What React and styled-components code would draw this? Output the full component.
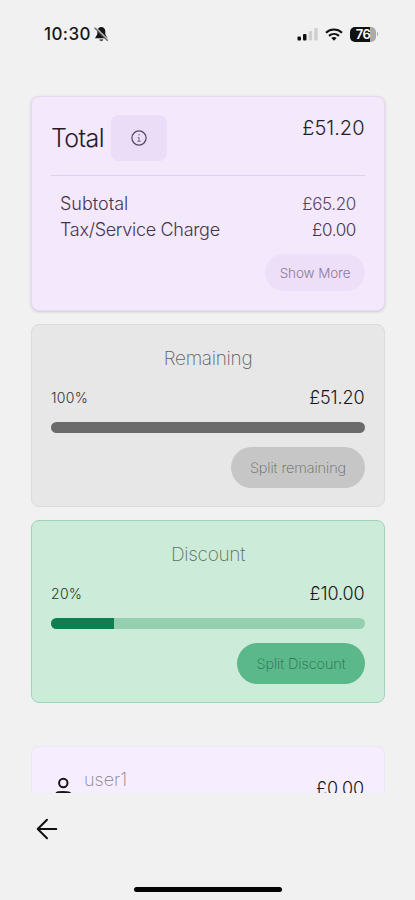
import React from 'react';
import styled, { createGlobalStyle } from 'styled-components';

const GlobalStyle = createGlobalStyle`
  * { box-sizing: border-box; }
  body { margin: 0; background: #f1f1f1; }
`;

const Screen = styled.div`
  width: 415px;
  height: 900px;
  display: flex;
  flex-direction: column;
  overflow: hidden;
  background: #f1f1f1;
  color: #171717;
  font-family: Inter, 'Liberation Sans', sans-serif;
`;

const StatusBar = styled.header`
  height: 68px;
  flex: none;
  display: flex;
  align-items: center;
  justify-content: space-between;
  padding: 0 37px 0 44px;
`;

const StatusGroup = styled.div`
  display: flex;
  align-items: center;
  gap: ${(p) => p.$gap}px;
`;

const Text = styled.span`
  display: block;
  white-space: nowrap;
  font-size: ${(p) => p.$size}px;
  line-height: ${(p) => p.$line || 24}px;
  font-weight: ${(p) => p.$weight || 400};
  letter-spacing: ${(p) => p.$track || 0}px;
  color: ${(p) => p.$color || 'inherit'};
`;

const Content = styled.main`
  height: 725px;
  flex: none;
  overflow: hidden;
  padding: 28px 30px 0 31px;
  display: flex;
  flex-direction: column;
`;

const Card = styled.section`
  flex: none;
  height: ${(p) => p.$height}px;
  margin-bottom: ${(p) => p.$after || 0}px;
  padding: ${(p) => p.$top}px 19px 0;
  border: 1px solid ${(p) => p.$border};
  border-radius: 8px;
  background: ${(p) => p.$fill};
  box-shadow: ${(p) => (p.$raised ? '0 1px 3px rgba(90, 60, 120, 0.22)' : 'none')};
`;

const TotalHeader = styled.div`
  height: 61px;
  display: flex;
  justify-content: space-between;
  border-bottom: 1px solid #e0d0ee;
`;

const TotalTitle = styled.div`
  height: 46px;
  display: flex;
  align-items: center;
`;

const InfoButton = styled.button`
  width: 56px;
  height: 46px;
  margin-left: 7px;
  padding: 0;
  display: grid;
  place-items: center;
  border: 0;
  border-radius: 8px;
  background: #ebdcf7;
`;

const Lines = styled.div`
  padding: 14px 9px 0;
`;

const Row = styled.div`
  display: flex;
  align-items: center;
  justify-content: space-between;
  height: ${(p) => p.$height}px;
  padding-right: ${(p) => p.$inset || 0}px;
`;

const Actions = styled.div`
  display: flex;
  justify-content: flex-end;
  margin-top: ${(p) => p.$top}px;
`;

const Pill = styled.button`
  width: ${(p) => p.$width}px;
  height: ${(p) => p.$height}px;
  padding: 0;
  display: grid;
  place-items: center;
  border: 0;
  border-radius: 24px;
  background: ${(p) => p.$fill};
  font-family: inherit;
`;

const CardTitle = styled.div`
  display: flex;
  justify-content: center;
  height: 32px;
`;

const Track = styled.div`
  height: 11px;
  margin-top: 5px;
  border-radius: 6px;
  overflow: hidden;
  background: ${(p) => p.$fill};
`;

const Fill = styled.div`
  height: 100%;
  background: ${(p) => p.$fill};
`;

const UserRow = styled.div`
  display: flex;
  align-items: flex-start;
  padding: 0 1px 0 3px;
`;

const UserName = styled.div`
  margin: 2px auto 0 12px;
`;

const UserAmount = styled.div`
  margin-top: 11px;
`;

const UserIcon = styled.svg`
  margin-top: 11px;
  display: block;
`;

const Footer = styled.footer`
  flex: 1;
  display: flex;
  flex-direction: column;
  justify-content: space-between;
  padding: 24px 36px 8px;
`;

const BackButton = styled.button`
  width: 22px;
  height: 24px;
  padding: 0;
  border: 0;
  background: none;
`;

const HomeBar = styled.div`
  width: 148px;
  height: 5px;
  margin-left: 98px;
  border-radius: 3px;
  background: #050505;
`;

const MutedBell = () => (
  <svg width="15" height="16" viewBox="0 0 15 16">
    <path d="M7.300 1C5 1 3.300 2.800 3.300 5v3.200L1 12.200h12.600l-2.300-4V5C11.300 2.800 9.600 1 7.300 1Z" fill="#151515" />
    <path d="M5.300 13.200h4a2 2 0 0 1-4 0Z" fill="#555" />
    <path d="M1.800 1.700 14.300 14" stroke="#cfcfcf" strokeWidth="1.400" />
    <path d="M.8 2 13.400 14.500" stroke="#666" strokeWidth="1.100" strokeLinecap="round" />
  </svg>
);

const Signal = () => (
  <svg width="21" height="13" viewBox="0 0 21 13">
    <rect x="0.500" y="8.500" width="3.500" height="4" rx="1" fill="#111" />
    <rect x="6" y="6" width="3.500" height="6.500" rx="1" fill="#111" />
    <rect x="11.700" y="3" width="3.500" height="9.500" rx="1" fill="#cfcfcf" />
    <rect x="17.200" y="0" width="3.500" height="12.500" rx="1" fill="#cfcfcf" />
  </svg>
);

const Wifi = () => (
  <svg width="18" height="13" viewBox="0 0 18 13" fill="none" stroke="#111" strokeWidth="2.100">
    <path d="M1 4.700C5.500.5 12.500.5 17 4.700" />
    <path d="M4 7.900c2.900-2.600 7.100-2.600 10 0" />
    <path d="m9 12.700-2.700-2.600c1.500-1.400 3.900-1.400 5.400 0Z" fill="#111" stroke="none" />
  </svg>
);

const BatteryBody = styled.div`
  width: 26px;
  height: 15px;
  display: grid;
  place-items: center;
  border-radius: 5px;
  background: linear-gradient(90deg, #111 77%, #aaa 77%);
  color: #fff;
`;

const BatteryTip = styled.div`
  width: 1px;
  height: 4px;
  border-radius: 0 2px 2px 0;
  background: #aaa;
`;

const InfoIcon = () => (
  <svg width="16" height="16" viewBox="0 0 16 16" fill="none" stroke="#55435f" strokeWidth="1.200">
    <circle cx="8" cy="8" r="7.100" />
    <path d="M8 7.300v4M6.700 7.500H8M6.500 11.400h3" stroke="#8a7896" />
    <circle cx="8" cy="4.800" r=".7" fill="#75637f" stroke="none" />
  </svg>
);

const BackIcon = () => (
  <svg width="22" height="24" viewBox="0 0 22 24" fill="none" stroke="#111" strokeWidth="2" strokeLinecap="round" strokeLinejoin="round">
    <path d="M20.300 12H1.700M11 2.700 1.700 12l9.300 9.300" />
  </svg>
);

function ProgressCard({ title, percent, amount, action, theme, width, after }) {
  return (
    <Card $height={183} $after={after} $top={22} $fill={theme.card} $border={theme.border}>
      <CardTitle><Text $size={19} $weight={200} $track={-0.3} $color={theme.title}>{title}</Text></CardTitle>
      <Row $height={38} $inset={0.5}>
        <Text $size={14} $weight={300} $track={0.3} $color={theme.percent}>{percent}%</Text>
        <Text $size={18} $weight={350} $track={-0.1}>{amount}</Text>
      </Row>
      <Track $fill={theme.track}><Fill $fill={theme.bar} style={{ width: `${percent}%` }} /></Track>
      <Actions $top={14}>
        <Pill $width={width} $height={41} $fill={theme.button}>
          <Text $size={14.5} $weight={250} $track={-0.1} $color={theme.buttonText}>{action}</Text>
        </Pill>
      </Actions>
    </Card>
  );
}

const gray = { card: '#e7e7e7', border: '#dcdcdc', title: '#606060', percent: '#333', track: '#c6c6c6', bar: '#6b6b6b', button: '#c6c6c6', buttonText: '#666' };
const green = { card: '#cdebd9', border: '#9fd4bb', title: '#557366', percent: '#24382f', track: '#94cfaf', bar: '#107e50', button: '#5bb88b', buttonText: '#246d4c' };

export default function App() {
  return (
    <>
      <GlobalStyle />
      <Screen>
        <StatusBar>
          <StatusGroup $gap={3}>
            <Text $size={17} $weight={450} $track={0.4}>10:30</Text>
            <MutedBell />
          </StatusGroup>
          <StatusGroup $gap={7}>
            <Signal />
            <Wifi />
            <StatusGroup $gap={1}>
              <BatteryBody><Text $size={13} $line={15} $weight={600} $track={-0.6}>76</Text></BatteryBody>
              <BatteryTip />
            </StatusGroup>
          </StatusGroup>
        </StatusBar>
        <Content>
          <Card $height={215} $after={13} $top={18} $fill="#f4e8fc" $border="#e7d9f3" $raised>
            <TotalHeader>
              <TotalTitle>
                <Text $size={25} $weight={300} $track={-0.6} $color="#241c2a">Total</Text>
                <InfoButton aria-label="Total information"><InfoIcon /></InfoButton>
              </TotalTitle>
              <Row $height={26} $inset={0.5}><Text $size={20} $weight={300} $color="#241c2a">£51.20</Text></Row>
            </TotalHeader>
            <Lines>
              <Row $height={27}>
                <Text $size={18} $weight={300} $color="#44364d">Subtotal</Text>
                <Text $size={17} $weight={300} $track={-0.35} $color="#54445e">£65.20</Text>
              </Row>
              <Row $height={26}>
                <Text $size={18} $weight={300} $track={-0.3} $color="#44364d">Tax/Service Charge</Text>
                <Text $size={17} $weight={300} $track={-0.35} $color="#44364d">£0.00</Text>
              </Row>
            </Lines>
            <Actions $top={11}>
              <Pill $width={100} $height={37} $fill="#eedff9">
                <Text $size={13.5} $weight={300} $track={-0.1} $color="#8b7a96">Show More</Text>
              </Pill>
            </Actions>
          </Card>
          <ProgressCard title="Remaining" percent={100} amount="£51.20" action="Split remaining" theme={gray} width={134} after={13} />
          <ProgressCard title="Discount" percent={20} amount="£10.00" action="Split Discount" theme={green} width={128} after={43} />
          <Card $height={120} $top={19} $fill="#f6eeff" $border="#ede6f4">
            <UserRow>
              <UserIcon width="18" height="20" viewBox="0 0 18 20" fill="none" stroke="#17131a" strokeWidth="2">
                <circle cx="9.300" cy="6" r="4.200" />
                <path d="M2.500 19v-2.800c0-.8 2-1.200 6.800-1.200s6.800.4 6.800 1.200V19" />
              </UserIcon>
              <UserName><Text $size={18} $weight={250} $color="#88808c">user1</Text></UserName>
              <UserAmount><Text $size={18} $weight={300} $track={-0.1}>£0.00</Text></UserAmount>
            </UserRow>
          </Card>
        </Content>
        <Footer>
          <BackButton aria-label="Back"><BackIcon /></BackButton>
          <HomeBar />
        </Footer>
      </Screen>
    </>
  );
}
